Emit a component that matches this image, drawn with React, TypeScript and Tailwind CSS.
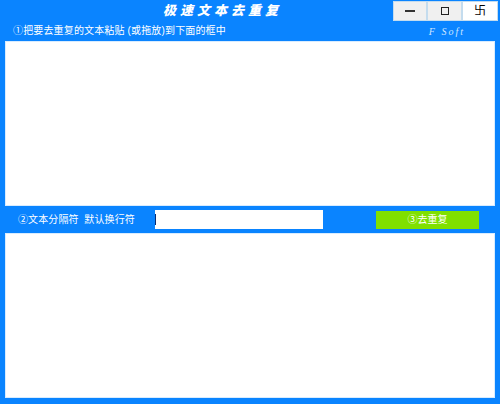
export default function App() {
  const cjk = "font-['Liberation_Sans','Noto_Sans_CJK_SC',sans-serif]"

  return (
    <div className={`w-[500px] h-[404px] bg-[#0a84ff] flex flex-col overflow-hidden text-white ${cjk}`}>
      {/* Title bar */}
      <div className="h-[21px] flex shrink-0">
        <div className="w-[393px] pl-[163px] pt-[2px] text-[13px] leading-[17px] font-black italic tracking-[4px] whitespace-nowrap">
          极速文本去重复
        </div>
        <div className="h-[20px] mt-px flex gap-[2px] p-px bg-[#c4dcee] text-black">
          <button className="w-[32px] bg-[#f0f0f0] flex items-center justify-center">
            <div className="w-[10px] h-[2px] bg-[#333333]" />
          </button>
          <button className="w-[33px] bg-[#f0f0f0] flex items-center justify-center">
            <div className="w-[8px] h-[8px] border border-[#222222]" />
          </button>
          <button className="w-[34px] bg-white flex items-center justify-center text-[12px] leading-none">
            卐
          </button>
        </div>
      </div>

      {/* Step 1 */}
      <div className="h-[20px] flex items-center justify-between shrink-0 pl-[13px] pr-[35px]">
        <span className="text-[10px] tracking-[0.15px] leading-[16px] whitespace-nowrap">①把要去重复的文本粘贴 (或拖放)到下面的框中</span>
        <span className="font-['Liberation_Serif',serif] italic text-[10px] tracking-[2px] text-[#cfe6ff]">F Soft</span>
      </div>

      <div className="mx-[5px] h-[165px] bg-white border border-[#d8ecff] shrink-0" />

      {/* Step 2 */}
      <div className="h-[27px] flex items-center shrink-0">
        <span className="w-[155px] pl-[18px] text-[10px] tracking-[0.1px] whitespace-pre">②文本分隔符  默认换行符</span>
        <div className="w-[168px] h-[19px] bg-white flex items-center">
          <div className="w-px h-[11px] bg-[#0a2a6e]" />
        </div>
        <button className="ml-[53px] w-[103px] h-[18px] bg-[#80e000] text-[10px] leading-[18px] text-center">
          ③去重复
        </button>
      </div>

      <div className="mx-[5px] h-[165px] bg-white border border-[#d8ecff] shrink-0" />
    </div>
  )
}
